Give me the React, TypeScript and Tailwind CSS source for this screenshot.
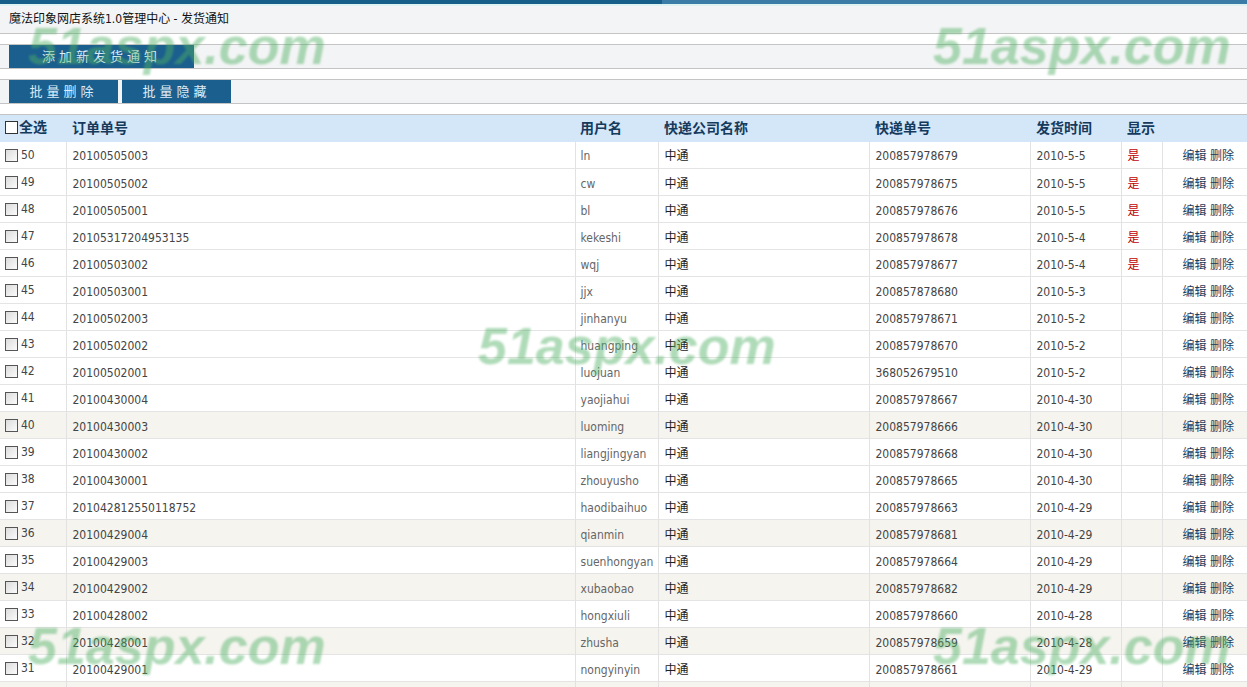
const rows = [
  { id: 50, order: "20100505003", user: "ln", no: "200857978679", date: "2010-5-5", show: true },
  { id: 49, order: "20100505002", user: "cw", no: "200857978675", date: "2010-5-5", show: true },
  { id: 48, order: "20100505001", user: "bl", no: "200857978676", date: "2010-5-5", show: true },
  { id: 47, order: "20105317204953135", user: "kekeshi", no: "200857978678", date: "2010-5-4", show: true },
  { id: 46, order: "20100503002", user: "wqj", no: "200857978677", date: "2010-5-4", show: true },
  { id: 45, order: "20100503001", user: "jjx", no: "200857878680", date: "2010-5-3" },
  { id: 44, order: "20100502003", user: "jinhanyu", no: "200857978671", date: "2010-5-2" },
  { id: 43, order: "20100502002", user: "huangping", no: "200857978670", date: "2010-5-2" },
  { id: 42, order: "20100502001", user: "luojuan", no: "368052679510", date: "2010-5-2" },
  { id: 41, order: "20100430004", user: "yaojiahui", no: "200857978667", date: "2010-4-30" },
  { id: 40, order: "20100430003", user: "luoming", no: "200857978666", date: "2010-4-30", alt: true },
  { id: 39, order: "20100430002", user: "liangjingyan", no: "200857978668", date: "2010-4-30" },
  { id: 38, order: "20100430001", user: "zhouyusho", no: "200857978665", date: "2010-4-30" },
  { id: 37, order: "201042812550118752", user: "haodibaihuo", no: "200857978663", date: "2010-4-29" },
  { id: 36, order: "20100429004", user: "qianmin", no: "200857978681", date: "2010-4-29", alt: true },
  { id: 35, order: "20100429003", user: "suenhongyan", no: "200857978664", date: "2010-4-29" },
  { id: 34, order: "20100429002", user: "xubaobao", no: "200857978682", date: "2010-4-29", alt: true },
  { id: 33, order: "20100428002", user: "hongxiuli", no: "200857978660", date: "2010-4-28" },
  { id: 32, order: "20100428001", user: "zhusha", no: "200857978659", date: "2010-4-28", alt: true },
  { id: 31, order: "20100429001", user: "nongyinyin", no: "200857978661", date: "2010-4-29" },
];

const Box = () => (
  <span className="inline-block w-[13px] h-[13px] border border-[#555] bg-gradient-to-br from-[#dcdcdc] to-[#fbfbfb] align-middle" />
);

// watermark overlay
const Mark = ({ className }: { className: string }) => (
  <div
    className={`absolute pointer-events-none select-none text-[52px] font-bold leading-none text-[#4fb063] opacity-45 blur-[1px] italic ${className}`}
    style={{ fontFamily: '"Liberation Sans", Arial, sans-serif' }}
  >
    51aspx.com
  </div>
);

const Btn = ({ label, w }: { label: string; w: string }) => (
  <button className={`h-[23px] ${w} bg-[#1b5f8e] text-[#dcecf8] text-[13px] tracking-[4px] leading-[23px]`}>
    {label}
  </button>
);

const td = "border-r border-[#e2e2e2] px-[6px] pt-[3px] whitespace-nowrap";

const App = () => {
  return (
    <div
      className="relative w-[1247px] h-[687px] overflow-hidden bg-white text-[12px] text-[#333]"
      style={{ fontFamily: '"DejaVu Sans Condensed", "DejaVu Sans", "Noto Sans CJK SC", sans-serif' }}
    >
      <div className="flex h-[4px]">
        <div className="w-[662px] bg-[#175f8b]" />
        <div className="flex-1 bg-[#3b7ca6]" />
      </div>
      <div className="h-[2px] bg-[#def2f2]" />
      <div className="h-[28px] bg-[#f3f4f5] border-b border-[#c4c4c4] px-[9px] leading-[27px] text-[#111]">
        魔法印象网店系统1.0管理中心 - 发货通知
      </div>
      <div className="h-[10px]" />
      <div className="border-y border-[#c4c4c4] bg-[#f3f4f5] h-[25px] px-[9px]">
        <Btn label="添加新发货通知" w="w-[185px]" />
      </div>
      <div className="h-[10px]" />
      <div className="border-y border-[#c4c4c4] bg-[#f3f4f5] h-[25px] px-[9px] flex gap-[4px]">
        <Btn label="批量删除" w="w-[109px]" />
        <Btn label="批量隐藏" w="w-[109px]" />
      </div>
      <div className="h-[10px]" />

      <table className="w-full border-collapse table-fixed border-t border-[#c4c4c4]">
        <colgroup>
          <col className="w-[66px]" />
          <col className="w-[509px]" />
          <col className="w-[83px]" />
          <col className="w-[211px]" />
          <col className="w-[161px]" />
          <col className="w-[91px]" />
          <col className="w-[41px]" />
          <col />
        </colgroup>
        <thead>
          <tr className="h-[27px] bg-[#d3e7f9] text-[14px] font-bold text-[#163a5c] text-left">
            <th className="pl-[5px] font-bold whitespace-nowrap">
              <span className="inline-flex items-center gap-[1px]">
                <span className="inline-block w-[13px] h-[13px] border border-[#333] bg-white" />
                全选
              </span>
            </th>
            <th className="px-[6px] font-bold">订单单号</th>
            <th className="px-[5px] font-bold">用户名</th>
            <th className="px-[6px] font-bold">快递公司名称</th>
            <th className="px-[6px] font-bold">快递单号</th>
            <th className="px-[6px] font-bold">发货时间</th>
            <th className="px-[6px] font-bold">显示</th>
            <th />
          </tr>
        </thead>
        <tbody>
          {rows.map((r) => (
            <tr
              key={r.id}
              className={`h-[27px] border-b border-[#e4e4e4] ${r.alt ? "bg-[#f5f4ef]" : "bg-white"}`}
            >
              <td className={`${td} pl-[5px] pr-0 text-[#444]`}>
                <span className="inline-flex items-center gap-[3px]">
                  <Box />
                  {r.id}
                </span>
              </td>
              <td className={`${td} text-[#444]`}>{r.order}</td>
              <td className={`${td} pl-[5px] text-[#666]`}>{r.user}</td>
              <td className={`${td} text-[#222]`}>中通</td>
              <td className={`${td} text-[#444]`}>{r.no}</td>
              <td className={`${td} text-[#444]`}>{r.date}</td>
              <td className={`${td} text-[#c00000]`}>{r.show ? "是" : ""}</td>
              <td className="text-right pr-[13px] pt-[3px] text-[#1c3c5c] whitespace-nowrap">编辑 删除</td>
            </tr>
          ))}
          <tr className="h-[27px] bg-[#f5f4ef]">
            <td className={td} />
            <td className={td} />
            <td className={td} />
            <td className={td} />
            <td className={td} />
            <td className={td} />
            <td className={td} />
            <td />
          </tr>
        </tbody>
      </table>

      <Mark className="left-[28px] top-[20px]" />
      <Mark className="left-[933px] top-[20px]" />
      <Mark className="left-[478px] top-[320px]" />
      <Mark className="left-[28px] top-[620px]" />
      <Mark className="left-[933px] top-[620px]" />
    </div>
  );
};

export default App;
